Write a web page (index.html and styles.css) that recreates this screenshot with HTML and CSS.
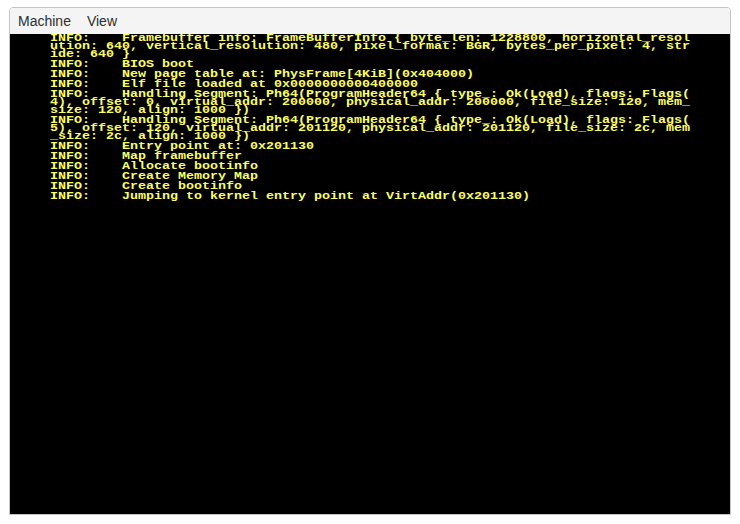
FILE: index.html
```html
<!DOCTYPE html>
<html>
<head>
<meta charset="utf-8">
<link rel="stylesheet" href="styles.css">
</head>
<body>
<div class="window">
  <div class="menubar">
    <span class="menu-item">Machine</span>
    <span class="menu-item">View</span>
  </div>
  <div class="screen">
    <div class="fb">
      <div class="entry">INFO:    Framebuffer info: FrameBufferInfo { byte_len: 1228800, horizontal_resol
ution: 640, vertical_resolution: 480, pixel_format: BGR, bytes_per_pixel: 4, str
ide: 640 }</div>
      <div class="entry">INFO:    BIOS boot</div>
      <div class="entry">INFO:    New page table at: PhysFrame[4KiB](0x404000)</div>
      <div class="entry">INFO:    Elf file loaded at 0x0000000000400000</div>
      <div class="entry">INFO:    Handling Segment: Ph64(ProgramHeader64 { type_: Ok(Load), flags: Flags(
4), offset: 0, virtual_addr: 200000, physical_addr: 200000, file_size: 120, mem_
size: 120, align: 1000 })</div>
      <div class="entry">INFO:    Handling Segment: Ph64(ProgramHeader64 { type_: Ok(Load), flags: Flags(
5), offset: 120, virtual_addr: 201120, physical_addr: 201120, file_size: 2c, mem
_size: 2c, align: 1000 })</div>
      <div class="entry">INFO:    Entry point at: 0x201130</div>
      <div class="entry">INFO:    Map framebuffer</div>
      <div class="entry">INFO:    Allocate bootinfo</div>
      <div class="entry">INFO:    Create Memory Map</div>
      <div class="entry">INFO:    Create bootinfo</div>
      <div class="entry">INFO:    Jumping to kernel entry point at VirtAddr(0x201130)</div>
    </div>
  </div>
</div>
</body>
</html>
```
FILE: styles.css
```css
html, body {
  margin: 0;
  padding: 0;
  background: #ffffff;
}
.window {
  margin: 7px 0 0 9px;
  width: 720px;
  border: 1px solid #c4c4c4;
  border-radius: 4px 4px 0 0;
  overflow: hidden;
}
.menubar {
  height: 26px;
  background: #f4f4f4;
  display: flex;
  align-items: center;
  font-family: "Liberation Sans", Arial, sans-serif;
  font-size: 14px;
  color: #2e2e2e;
}
.menu-item {
  padding: 0 8px;
  line-height: 26px;
}
.screen {
  height: 480px;
  background: #000000;
  padding-left: 40px;
}
.fb {
  width: 528px;
  transform: scaleX(1.2121);
  transform-origin: 0 0;
  font-family: "Liberation Mono", "DejaVu Sans Mono", monospace;
  font-weight: bold;
  font-size: 11px;
  line-height: 8px;
  color: #ffff55;
}
.entry {
  white-space: pre;
  margin-bottom: 2px;
}
```
